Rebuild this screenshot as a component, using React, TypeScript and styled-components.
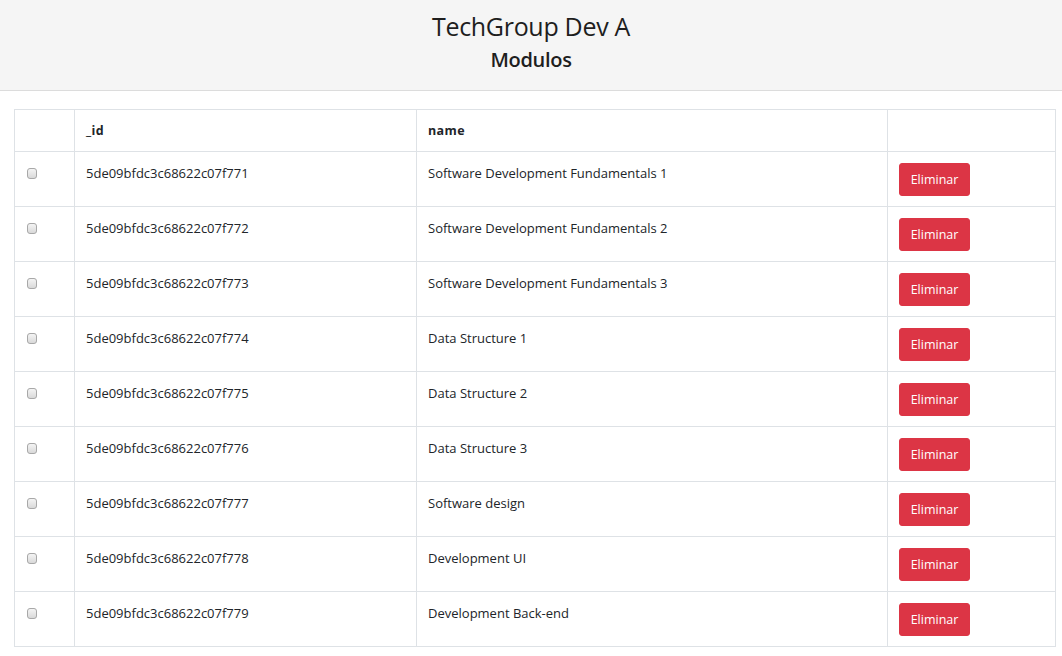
import React from 'react'
import styled, { createGlobalStyle } from 'styled-components'

const modulos = [
  { _id: '5de09bfdc3c68622c07f771', name: 'Software Development Fundamentals 1' },
  { _id: '5de09bfdc3c68622c07f772', name: 'Software Development Fundamentals 2' },
  { _id: '5de09bfdc3c68622c07f773', name: 'Software Development Fundamentals 3' },
  { _id: '5de09bfdc3c68622c07f774', name: 'Data Structure 1' },
  { _id: '5de09bfdc3c68622c07f775', name: 'Data Structure 2' },
  { _id: '5de09bfdc3c68622c07f776', name: 'Data Structure 3' },
  { _id: '5de09bfdc3c68622c07f777', name: 'Software design' },
  { _id: '5de09bfdc3c68622c07f778', name: 'Development UI' },
  { _id: '5de09bfdc3c68622c07f779', name: 'Development Back-end' },
]

export default function App() {
  return (
    <>
      <GlobalStyle />
      <StHeader>
        <StTitle>TechGroup Dev A</StTitle>
        <StSubtitle>Modulos</StSubtitle>
      </StHeader>
      <StTableWrap>
        <StTable>
          <thead>
            <tr>
              <StTh $width={60}></StTh>
              <StTh $width={342}>_id</StTh>
              <StTh $width={471}>name</StTh>
              <StTh></StTh>
            </tr>
          </thead>
          <tbody>
            {modulos.map((m) => (
              <tr key={m._id}>
                <StTd>
                  <StCheck type="checkbox" />
                </StTd>
                <StTd>{m._id}</StTd>
                <StTd>{m.name}</StTd>
                <StTd>
                  <StDeleteButton>Eliminar</StDeleteButton>
                </StTd>
              </tr>
            ))}
          </tbody>
        </StTable>
      </StTableWrap>
    </>
  )
}

const GlobalStyle = createGlobalStyle`
  body {
    margin: 0;
    background: #fff;
    font-family: "Open Sans", "Noto Sans", sans-serif;
    color: #212529;
  }
`

const StHeader = styled.header`
  background-color: #f5f5f5;
  border-bottom: 1px solid #dcdcdc;
  height: 91px;
  box-sizing: border-box;
  display: flex;
  flex-direction: column;
  align-items: center;
  padding-top: 9px;
`

const StTitle = styled.h1`
  margin: 0;
  font-size: 25px;
  font-weight: 400;
  line-height: 34px;
  letter-spacing: -0.3px;
  color: #1e1e1e;
`

const StSubtitle = styled.h2`
  margin: 0;
  font-size: 20px;
  font-weight: 600;
  line-height: 34px;
  letter-spacing: -0.3px;
  color: #1e1e1e;
`

const StTableWrap = styled.div`
  padding: 18px 6px 0 14px;
`

const StTable = styled.table`
  width: 100%;
  border-collapse: collapse;
  font-size: 13px;
`

const StTh = styled.th<{ $width?: number }>`
  width: ${(p) => (p.$width ? `${p.$width}px` : 'auto')};
  text-align: left;
  font-weight: 700;
  height: 42px;
  box-sizing: border-box;
  padding: 0 11px;
  border: 1px solid #dee2e6;
  vertical-align: middle;
  font-size: 12.5px;
  letter-spacing: 0.4px;
`

const StTd = styled.td`
  height: 55px;
  box-sizing: border-box;
  padding: 11px 11px 0;
  border: 1px solid #dee2e6;
  vertical-align: top;
  line-height: 20px;
`

const StCheck = styled.input`
  appearance: none;
  display: block;
  margin: 5px 0 0 1px;
  width: 10px;
  height: 11px;
  border: 1px solid #a8a8a8;
  border-radius: 3px;
  background: linear-gradient(#f4f4f4, #d9d9d9);
`

const StDeleteButton = styled.button`
  display: block;
  background-color: #dc3545;
  color: #fff;
  border: 1px solid #dc3545;
  border-radius: 3px;
  font-family: "Open Sans", "Noto Sans", sans-serif;
  font-size: 12.5px;
  font-weight: 400;
  height: 33px;
  width: 71px;
  padding: 0;
  cursor: pointer;
`
